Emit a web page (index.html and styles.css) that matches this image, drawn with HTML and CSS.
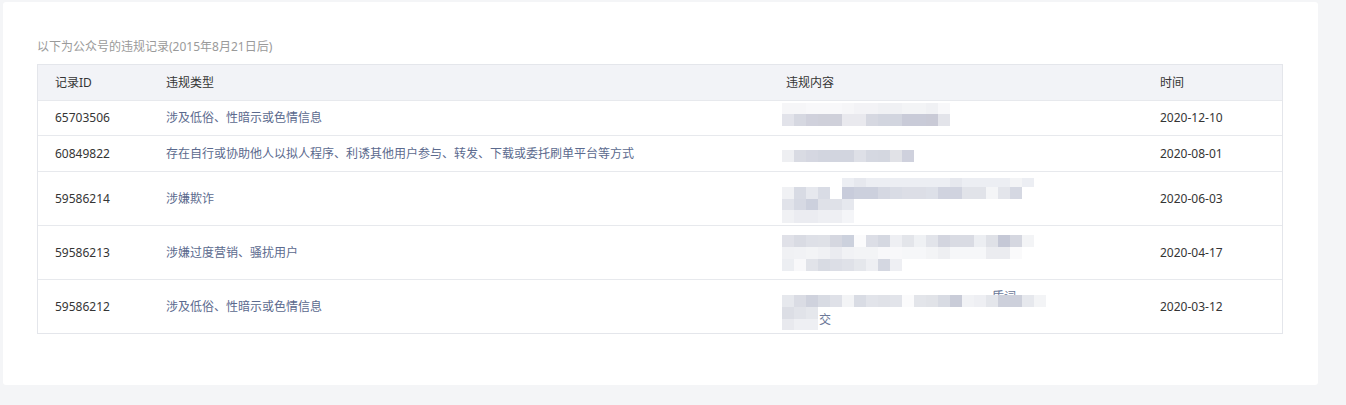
FILE: index.html
```html
<!DOCTYPE html>
<html lang="zh-CN">
<head>
<meta charset="UTF-8">
<meta name="viewport" content="width=device-width, initial-scale=1.0">
<title>违规记录</title>
<link rel="stylesheet" href="styles.css">
</head>
<body>
<div class="card">
    <p class="caption">以下为公众号的违规记录(2015年8月21日后)</p>
    <div class="records">
        <div class="row head">
            <div class="cell">记录ID</div>
            <div class="cell">违规类型</div>
            <div class="cell content-title">违规内容</div>
            <div class="cell">时间</div>
        </div>
        <div class="row short">
            <div class="cell">65703506</div>
            <div class="cell type">涉及低俗、性暗示或色情信息</div>
            <div class="cell content">
                <svg width="180" height="34">
                    <g transform="translate(0,2)">
                        <rect x="0" width="12" height="11" fill="#f6f6f8"/><rect x="12" width="12" height="11" fill="#f6f6f8"/><rect x="24" width="12" height="11" fill="#f8f8fa"/><rect x="36" width="12" height="11" fill="#f8f8fa"/><rect x="48" width="12" height="11" fill="#f8f8fa"/><rect x="60" width="12" height="11" fill="#f6f6f8"/><rect x="72" width="12" height="11" fill="#f3f3f6"/><rect x="84" width="12" height="11" fill="#f3f3f6"/><rect x="96" width="12" height="11" fill="#f0f1f4"/><rect x="108" width="12" height="11" fill="#f0f1f4"/><rect x="120" width="12" height="11" fill="#f3f4f6"/><rect x="132" width="12" height="11" fill="#f3f4f6"/><rect x="144" width="12" height="11" fill="#f0f1f4"/><rect x="156" width="12" height="11" fill="#f8f8fa"/>
                    </g>
                    <g transform="translate(0,13)">
                        <rect x="0" width="12" height="12" fill="#e2e3ea"/><rect x="12" width="12" height="12" fill="#d6d8e1"/><rect x="24" width="12" height="12" fill="#d0d1dc"/><rect x="36" width="12" height="12" fill="#cfd0da"/><rect x="48" width="12" height="12" fill="#cfd0da"/><rect x="60" width="12" height="12" fill="#e9e9ee"/><rect x="72" width="12" height="12" fill="#e9e9ee"/><rect x="84" width="12" height="12" fill="#d6d8e1"/><rect x="96" width="12" height="12" fill="#d2d5df"/><rect x="108" width="12" height="12" fill="#d2d5df"/><rect x="120" width="12" height="12" fill="#c9cbd8"/><rect x="132" width="12" height="12" fill="#c9cbd8"/><rect x="144" width="12" height="12" fill="#c9cad6"/><rect x="156" width="12" height="12" fill="#e3e4ea"/>
                    </g>
                </svg>
            </div>
            <div class="cell">2020-12-10</div>
        </div>
        <div class="row short">
            <div class="cell">60849822</div>
            <div class="cell type">存在自行或协助他人以拟人程序、利诱其他用户参与、转发、下载或委托刷单平台等方式</div>
            <div class="cell content">
                <svg width="180" height="35">
                    <g transform="translate(0,14)">
                        <rect x="0" width="12" height="12" fill="#eeeff2"/><rect x="12" width="12" height="12" fill="#d9dbe3"/><rect x="24" width="12" height="12" fill="#d5d7e1"/><rect x="36" width="12" height="12" fill="#d2d5df"/><rect x="48" width="12" height="12" fill="#d2d5df"/><rect x="60" width="12" height="12" fill="#d2d5df"/><rect x="72" width="12" height="12" fill="#dee0e7"/><rect x="84" width="12" height="12" fill="#d5d8e1"/><rect x="96" width="12" height="12" fill="#d4d7e0"/><rect x="108" width="12" height="12" fill="#e1e2e7"/><rect x="120" width="12" height="12" fill="#cfd1dd"/>
                    </g>
                </svg>
            </div>
            <div class="cell">2020-08-01</div>
        </div>
        <div class="row tall">
            <div class="cell">59586214</div>
            <div class="cell type">涉嫌欺诈</div>
            <div class="cell content">
                <svg width="260" height="53">
                    <g transform="translate(0,6)">
                        <rect x="60" width="192" height="9" fill="#eceef3"/><rect x="72" width="12" height="9" fill="#e6e8ee"/><rect x="168" width="12" height="9" fill="#e6e8ee"/><rect x="228" width="12" height="9" fill="#f3f4f6"/>
                    </g>
                    <g transform="translate(0,15)">
                        <rect x="0" width="12" height="12" fill="#f0f1f4"/><rect x="12" width="12" height="12" fill="#d8dbe4"/><rect x="24" width="12" height="12" fill="#e6e8ee"/><rect x="36" width="12" height="12" fill="#d9dce5"/><rect x="60" width="12" height="12" fill="#c8ccdb"/><rect x="72" width="12" height="12" fill="#ccd0dd"/><rect x="84" width="12" height="12" fill="#ccd0dd"/><rect x="96" width="12" height="12" fill="#d5d8e2"/><rect x="108" width="12" height="12" fill="#d9dce5"/><rect x="120" width="12" height="12" fill="#dcdee6"/><rect x="132" width="12" height="12" fill="#dcdee6"/><rect x="144" width="12" height="12" fill="#dde0e8"/><rect x="156" width="12" height="12" fill="#d0d3df"/><rect x="168" width="12" height="12" fill="#d0d3df"/><rect x="180" width="12" height="12" fill="#e1e3e9"/><rect x="192" width="12" height="12" fill="#e1e3e9"/><rect x="204" width="12" height="12" fill="#f4f5f7"/><rect x="216" width="12" height="12" fill="#e3e5eb"/><rect x="228" width="12" height="12" fill="#d5d8e2"/>
                    </g>
                    <g transform="translate(0,27)">
                        <rect x="0" width="12" height="11" fill="#e1e3ea"/><rect x="12" width="12" height="11" fill="#d6d9e3"/><rect x="24" width="12" height="11" fill="#ccd0dd"/><rect x="36" width="12" height="11" fill="#dfe1e8"/><rect x="48" width="12" height="11" fill="#dfe1e8"/><rect x="60" width="12" height="11" fill="#e6e8ee"/>
                    </g>
                    <g transform="translate(0,38)">
                        <rect x="0" width="12" height="13" fill="#f0f1f4"/><rect x="12" width="12" height="13" fill="#ebecf1"/><rect x="24" width="12" height="13" fill="#ebecf1"/><rect x="36" width="12" height="13" fill="#eeeff3"/><rect x="48" width="12" height="13" fill="#eeeff3"/><rect x="60" width="12" height="13" fill="#f4f5f8"/>
                    </g>
                </svg>
            </div>
            <div class="cell">2020-06-03</div>
        </div>
        <div class="row tall">
            <div class="cell">59586213</div>
            <div class="cell type">涉嫌过度营销、骚扰用户</div>
            <div class="cell content">
                <svg width="260" height="53">
                    <g transform="translate(0,9)">
                        <rect x="0" width="12" height="12" fill="#e0e1e8"/><rect x="12" width="12" height="12" fill="#d9dbe3"/><rect x="24" width="12" height="12" fill="#dee0e7"/><rect x="36" width="12" height="12" fill="#dfe1e7"/><rect x="48" width="12" height="12" fill="#d5d7e0"/><rect x="60" width="12" height="12" fill="#ccd1dd"/><rect x="72" width="12" height="12" fill="#fbfbfc"/><rect x="84" width="12" height="12" fill="#dcdee6"/><rect x="96" width="12" height="12" fill="#d5d8e1"/><rect x="108" width="12" height="12" fill="#eeeff3"/><rect x="120" width="12" height="12" fill="#e3e5ea"/><rect x="132" width="12" height="12" fill="#eff1f4"/><rect x="144" width="12" height="12" fill="#e2e4ea"/><rect x="156" width="12" height="12" fill="#d3d5df"/><rect x="168" width="12" height="12" fill="#d9dbe3"/><rect x="180" width="12" height="12" fill="#d9dbe3"/><rect x="192" width="12" height="12" fill="#eceef2"/><rect x="204" width="12" height="12" fill="#dfe1e7"/><rect x="216" width="12" height="12" fill="#c5c8d6"/><rect x="228" width="12" height="12" fill="#d5d7e0"/><rect x="240" width="12" height="12" fill="#f3f4f6"/>
                    </g>
                    <g transform="translate(0,21)">
                        <rect x="0" width="12" height="12" fill="#f0f1f4"/><rect x="12" width="12" height="12" fill="#f1f2f5"/><rect x="24" width="12" height="12" fill="#f3f4f6"/><rect x="36" width="12" height="12" fill="#f0f1f4"/><rect x="48" width="12" height="12" fill="#eaebf0"/><rect x="60" width="12" height="12" fill="#f1f2f5"/><rect x="72" width="12" height="12" fill="#f3f4f6"/><rect x="84" width="12" height="12" fill="#f3f4f6"/><rect x="96" width="12" height="12" fill="#f8f8fa"/><rect x="108" width="12" height="12" fill="#f8f8fa"/><rect x="120" width="12" height="12" fill="#f6f7f9"/><rect x="132" width="12" height="12" fill="#f6f7f9"/><rect x="144" width="12" height="12" fill="#f3f4f6"/><rect x="156" width="12" height="12" fill="#eeeff2"/><rect x="168" width="12" height="12" fill="#f6f7f9"/><rect x="180" width="12" height="12" fill="#f6f7f9"/><rect x="192" width="12" height="12" fill="#f6f7f9"/><rect x="204" width="12" height="12" fill="#ebecf0"/><rect x="216" width="12" height="12" fill="#ebecf0"/><rect x="228" width="12" height="12" fill="#fafafb"/>
                    </g>
                    <g transform="translate(0,33)">
                        <rect x="0" width="12" height="12" fill="#eceef2"/><rect x="12" width="12" height="12" fill="#f8f8fa"/><rect x="24" width="12" height="12" fill="#e1e3e9"/><rect x="36" width="12" height="12" fill="#d8dbe3"/><rect x="48" width="12" height="12" fill="#dcdee6"/><rect x="60" width="12" height="12" fill="#dfe1e8"/><rect x="72" width="12" height="12" fill="#e5e7ec"/><rect x="84" width="12" height="12" fill="#eeeff3"/><rect x="96" width="12" height="12" fill="#d4d7e1"/><rect x="108" width="12" height="12" fill="#eeeff3"/>
                    </g>
                </svg>
            </div>
            <div class="cell">2020-04-17</div>
        </div>
        <div class="row tall">
            <div class="cell">59586212</div>
            <div class="cell type">涉及低俗、性暗示或色情信息</div>
            <div class="cell content">
                <svg width="270" height="53">
                    <text x="210" y="21" class="frag">质词</text>
                    <g transform="translate(0,15)">
                        <rect x="0" width="12" height="12" fill="#e6e8ed"/><rect x="12" width="12" height="12" fill="#dadce4"/><rect x="24" width="12" height="12" fill="#cfd2dd"/><rect x="36" width="12" height="12" fill="#d8dbe3"/><rect x="48" width="12" height="12" fill="#dfe1e8"/><rect x="60" width="12" height="12" fill="#f3f4f6"/><rect x="72" width="12" height="12" fill="#d9dce4"/><rect x="84" width="12" height="12" fill="#e2e4ea"/><rect x="96" width="12" height="12" fill="#e0e2e8"/><rect x="108" width="12" height="12" fill="#e2e4ea"/><rect x="120" width="12" height="12" fill="#fbfbfc"/><rect x="132" width="12" height="12" fill="#e3e5ea"/><rect x="144" width="12" height="12" fill="#e1e3e8"/><rect x="156" width="12" height="12" fill="#d8dbe3"/><rect x="168" width="12" height="12" fill="#c9ccd8"/><rect x="180" width="12" height="12" fill="#f1f2f5"/><rect x="192" width="12" height="12" fill="#eeeff3"/><rect x="204" width="12" height="12" fill="#e4e6eb"/><rect x="216" width="12" height="12" fill="#cdd0db"/><rect x="228" width="12" height="12" fill="#cdd0db"/><rect x="240" width="12" height="12" fill="#e6e8ed"/><rect x="252" width="12" height="12" fill="#f3f4f6"/>
                    </g>
                    <g transform="translate(0,27)">
                        <rect x="0" width="12" height="12" fill="#dcdee5"/><rect x="12" width="12" height="12" fill="#e1e3e9"/><rect x="24" width="12" height="12" fill="#e5e7ec"/>
                    </g>
                    <g transform="translate(0,39)">
                        <rect x="0" width="12" height="11" fill="#e8e9ee"/><rect x="12" width="12" height="11" fill="#eeeff3"/><rect x="24" width="12" height="11" fill="#eeeff3"/>
                    </g>
                    <text x="37" y="44" class="frag">交</text>
                </svg>
            </div>
            <div class="cell">2020-03-12</div>
        </div>
    </div>
</div>
</body>
</html>
```

FILE: styles.css
```css
body {
    margin: 0;
    background-color: #f4f5f7;
    font-family: "Noto Sans", "Noto Sans CJK SC", sans-serif;
    font-size: 12px;
    color: #353535;
}
.card {
    width: 1281px;
    height: 347px;
    margin: 2px 0 0 3px;
    padding: 36px 0 0 34px;
    background-color: #fff;
    border-radius: 3px;
}
.caption {
    margin: 0 0 8px 0;
    line-height: 18px;
    color: #9a9a9a;
}
.records {
    width: 1244px;
    border: 1px solid #e4e6eb;
}
.row {
    display: grid;
    grid-template-columns: 111px 616px 378px 1fr;
    border-bottom: 1px solid #e7e9ed;
    line-height: 18px;
}
.row:last-child {
    border-bottom: none;
}
.row.head {
    height: 35px;
    background-color: #f2f3f7;
}
.row.short {
    height: 34px;
}
.row.short + .row.short {
    height: 35px;
}
.row.tall {
    height: 53px;
}
.cell {
    display: flex;
    align-items: center;
    padding-left: 17px;
    white-space: nowrap;
}
.cell.content-title {
    padding-left: 21px;
}
.cell.type {
    color: #5b6a8e;
}
.cell.content {
    align-items: flex-start;
}
.cell.content svg {
    display: block;
}
.frag {
    font-family: "Noto Sans CJK SC", sans-serif;
    font-size: 12px;
    fill: #6b7898;
}
```
